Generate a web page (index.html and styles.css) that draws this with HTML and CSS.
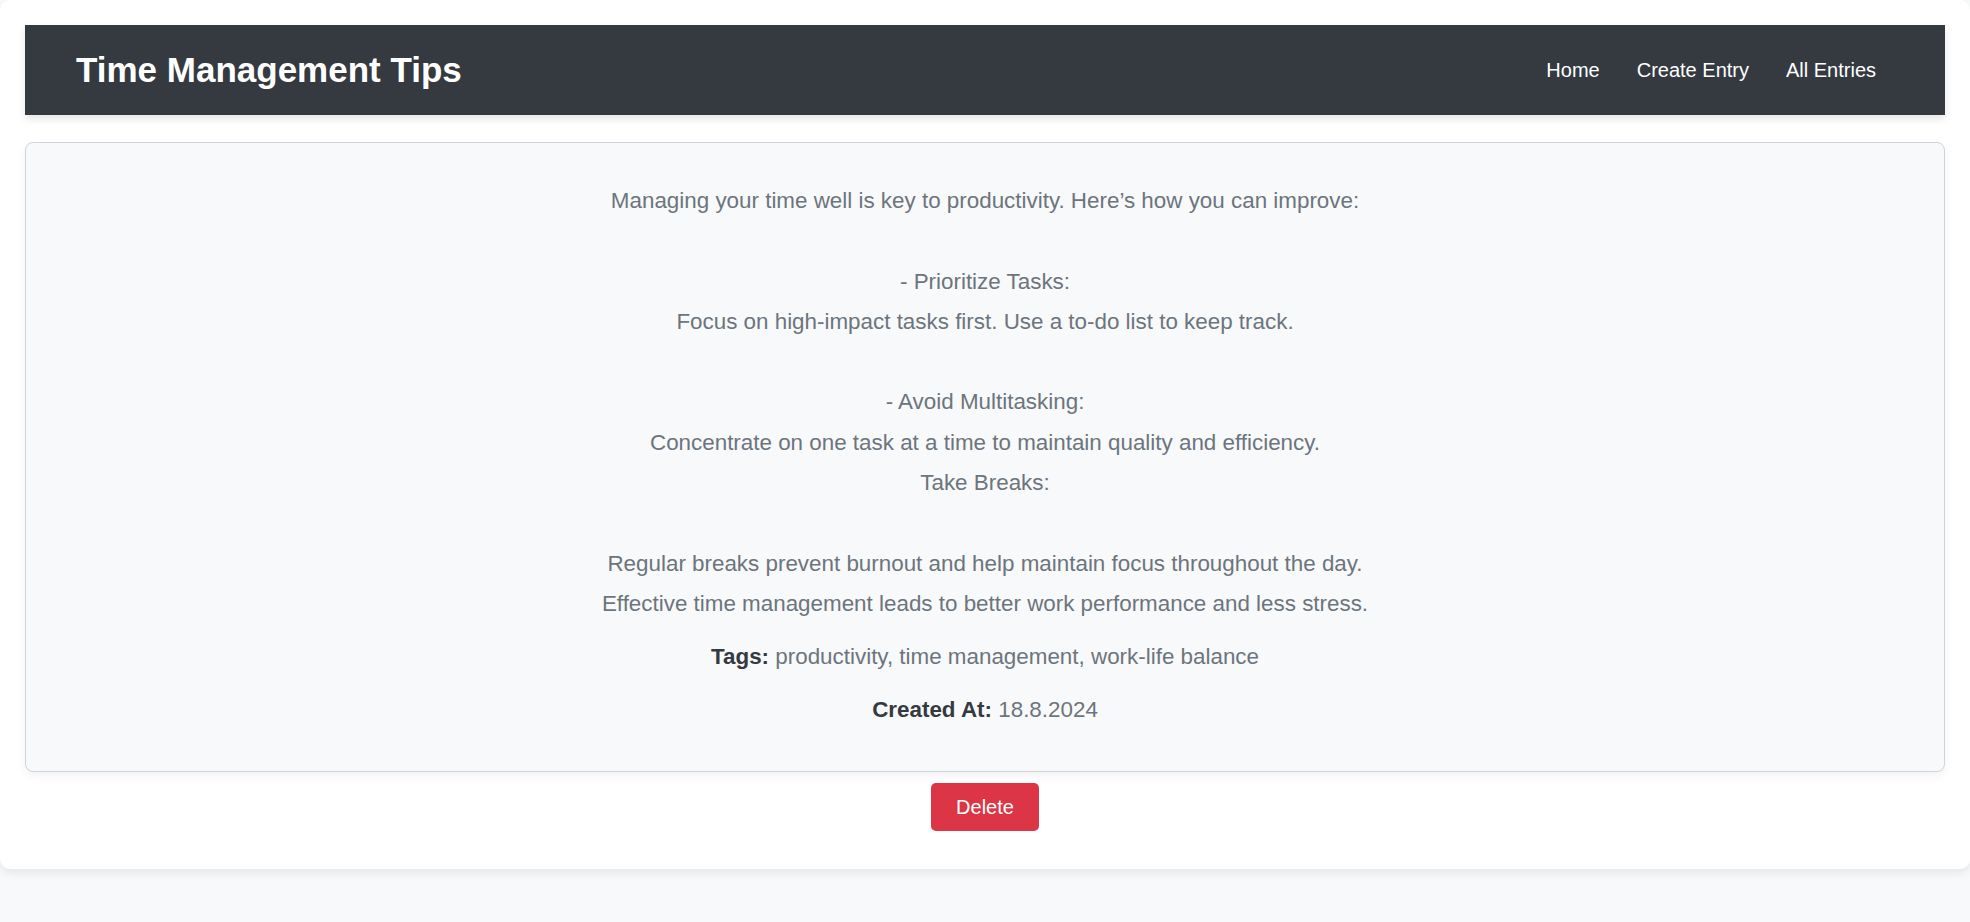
FILE: index.html
```html
<!DOCTYPE html>
<html lang="en">
<head>
<meta charset="utf-8">
<title>Time Management Tips</title>
<link rel="stylesheet" href="styles.css">
</head>
<body>
<div class="container">
  <header class="topbar">
    <h1 class="title">Time Management Tips</h1>
    <nav class="nav">
      <a href="#" class="nav-link">Home</a>
      <a href="#" class="nav-link">Create Entry</a>
      <a href="#" class="nav-link">All Entries</a>
    </nav>
  </header>
  <section class="card">
    <p class="content">Managing your time well is key to productivity. Here’s how you can improve:<br><br>- Prioritize Tasks:<br>Focus on high-impact tasks first. Use a to-do list to keep track.<br><br>- Avoid Multitasking:<br>Concentrate on one task at a time to maintain quality and efficiency.<br>Take Breaks:<br><br>Regular breaks prevent burnout and help maintain focus throughout the day.<br>Effective time management leads to better work performance and less stress.</p>
    <p class="meta meta-tags"><strong>Tags:</strong> productivity, time management, work-life balance</p>
    <p class="meta"><strong>Created At:</strong> 18.8.2024</p>
  </section>
  <div class="actions">
    <button class="btn-delete" type="button">Delete</button>
  </div>
</div>
</body>
</html>
```
FILE: styles.css
```css
html, body {
  margin: 0;
  padding: 0;
}
body {
  background: #f8f9fa;
  font-family: "Liberation Sans", Arial, sans-serif;
  font-size: 20px;
  color: #212529;
  min-height: 922px;
}
.container {
  background: #ffffff;
  border-radius: 10px;
  box-shadow: 0 4px 10px rgba(0, 0, 0, 0.08);
  padding: 25px 25px 38px;
}
.topbar {
  height: 90px;
  background: #343a40;
  display: flex;
  align-items: center;
  justify-content: space-between;
  padding: 0 50px 0 51px;
  box-shadow: 0 4px 8px rgba(0, 0, 0, 0.1);
}
.title {
  margin: 0;
  color: #ffffff;
  font-size: 35px;
  font-weight: bold;
}
.nav {
  display: flex;
  gap: 37px;
  padding-right: 19px;
}
.nav-link {
  color: #ffffff;
  text-decoration: none;
  font-size: 20px;
}
.card {
  margin-top: 27px;
  background: #f8f9fa;
  border: 1px solid #ced4da;
  border-radius: 8px;
  box-shadow: 0 4px 10px rgba(0, 0, 0, 0.05);
  padding: 18px 20px 45px;
  text-align: center;
  color: #6c757d;
  font-size: 22.4px;
}
.content {
  margin: 20px 0 17px;
  line-height: 40.3px;
}
.meta {
  margin: 0;
  line-height: 32px;
}
.meta-tags {
  margin-bottom: 21px;
}
.meta strong {
  color: #343a40;
}
.actions {
  display: flex;
  justify-content: center;
  padding-top: 11px;
}
.btn-delete {
  width: 108px;
  height: 48px;
  background: #dc3545;
  color: #ffffff;
  border: none;
  border-radius: 5px;
  font-family: "Liberation Sans", Arial, sans-serif;
  font-size: 20px;
  cursor: pointer;
}
```
